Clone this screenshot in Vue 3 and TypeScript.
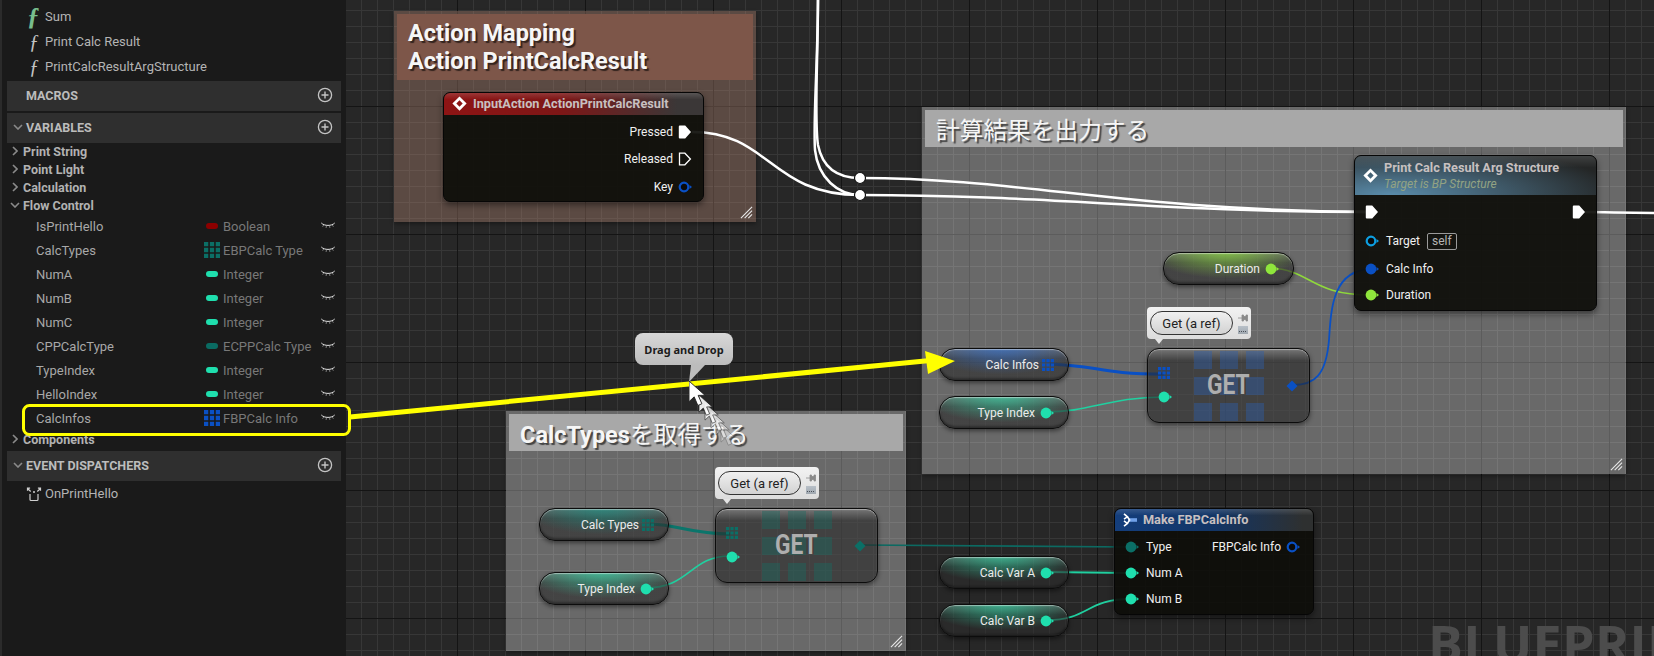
<script setup lang="ts">
type Pin = 'dot' | 'grid';

interface Comment {
  title: string;
  jp?: string;
  x: number;
  y: number;
  w: number;
  h: number;
  bar: number;
  brown?: boolean;
}

interface Pill {
  label: string;
  x: number;
  y: number;
  w: number;
  color: string;
  glow: string;
  pin: Pin;
}

const functions = [
  { name: 'Sum', main: true },
  { name: 'Print Calc Result', main: false },
  { name: 'PrintCalcResultArgStructure', main: false },
];

const categories = ['Print String', 'Point Light', 'Calculation'];

const variables = [
  { name: 'IsPrintHello', type: 'Boolean', color: '#8c0000', array: false },
  { name: 'CalcTypes', type: 'EBPCalc Type', color: '#0b6f66', array: true },
  { name: 'NumA', type: 'Integer', color: '#1fdfae', array: false },
  { name: 'NumB', type: 'Integer', color: '#1fdfae', array: false },
  { name: 'NumC', type: 'Integer', color: '#1fdfae', array: false },
  { name: 'CPPCalcType', type: 'ECPPCalc Type', color: '#0a6b62', array: false },
  { name: 'TypeIndex', type: 'Integer', color: '#1fdfae', array: false },
  { name: 'HelloIndex', type: 'Integer', color: '#1fdfae', array: false },
  { name: 'CalcInfos', type: 'FBPCalc Info', color: '#0a50c4', array: true },
];

const comments: Comment[] = [
  { title: 'Action Mapping\nAction PrintCalcResult', x: 394, y: 11, w: 362, h: 211, bar: 66, brown: true },
  { title: '', jp: '計算結果を出力する', x: 922, y: 107, w: 704, h: 367, bar: 37 },
  { title: 'CalcTypes', jp: 'を取得する', x: 506, y: 411, w: 400, h: 240, bar: 37 },
];

const TEAL = '#1fdfae';
const DARK_TEAL = '#0b6f66';
const BLUE = '#0a50c4';
const LIME = '#8fe63c';

const pills: Pill[] = [
  { label: 'Duration', x: 1163, y: 252, w: 131, color: LIME, glow: '143,230,60', pin: 'dot' },
  { label: 'Calc Infos', x: 939, y: 348, w: 130, color: BLUE, glow: '50,115,215', pin: 'grid' },
  { label: 'Type Index', x: 939, y: 396, w: 130, color: TEAL, glow: '50,220,170', pin: 'dot' },
  { label: 'Calc Types', x: 539, y: 508, w: 130, color: DARK_TEAL, glow: '20,150,135', pin: 'grid' },
  { label: 'Type Index', x: 539, y: 572, w: 130, color: TEAL, glow: '50,220,170', pin: 'dot' },
  { label: 'Calc Var A', x: 939, y: 556, w: 130, color: TEAL, glow: '50,220,170', pin: 'dot' },
  { label: 'Calc Var B', x: 939, y: 604, w: 130, color: TEAL, glow: '50,220,170', pin: 'dot' },
];

const getNodes = [
  { x: 1147, y: 348, color: BLUE, square: 'rgba(45,95,175,0.42)' },
  { x: 715, y: 508, color: DARK_TEAL, square: 'rgba(20,110,100,0.38)' },
];

const wires = [
  { d: 'M818 -5 C818 60 814 120 818 145 C823 170 840 178 860 178', color: '#fff', width: 2.5 },
  { d: 'M818 -5 C818 60 813 120 815 150 C818 178 838 195 860 195', color: '#fff', width: 2.5 },
  { d: 'M692 132 C770 132 770 195 860 195', color: '#fff', width: 2.5 },
  { d: 'M860 178 C1020 178 1130 211 1372 212', color: '#fff', width: 2.5 },
  { d: 'M860 195 C1050 195 1160 212 1372 212', color: '#fff', width: 2.5 },
  { d: 'M1580 212 C1610 212 1620 213 1660 213', color: '#fff', width: 2.5 },
  { d: 'M1270 268 C1312 270 1310 295 1371 295', color: '#8fd83c', width: 1.6 },
  { d: 'M1293 385 C1315 385 1326 375 1329 340 C1331 310 1332 270 1371 269', color: BLUE, width: 1.8 },
  { d: 'M1050 364 C1100 366 1100 374 1164 374', color: BLUE, width: 3 },
  { d: 'M1046 412 C1090 412 1110 397 1164 397', color: '#20d0a0', width: 1.6 },
  { d: 'M650 524 C680 525 690 534 730 534', color: '#0b756b', width: 3 },
  { d: 'M646 588 C690 588 690 556 730 556', color: '#20d0a0', width: 1.6 },
  { d: 'M861 545 L1131 547', color: '#0c6a62', width: 1.6 },
  { d: 'M1046 572 L1131 573', color: '#20d0a0', width: 2.2 },
  { d: 'M1046 620 C1090 620 1085 599 1131 599', color: '#20d0a0', width: 1.8 },
];

const knots = [178, 195];

const trail = [
  { x: 0, y: 0, scale: 1.15, alpha: 1 },
  { x: 10, y: 14, scale: 0.95, alpha: 0.9 },
  { x: 16, y: 22, scale: 0.95, alpha: 0.75 },
  { x: 22, y: 30, scale: 0.95, alpha: 0.6 },
  { x: 27, y: 37, scale: 0.95, alpha: 0.45 },
  { x: 32, y: 44, scale: 0.95, alpha: 0.3 },
].reverse();

const boxStyle = (b: { x: number; y: number; w?: number; h?: number }) => ({
  left: `${b.x}px`,
  top: `${b.y}px`,
  width: b.w ? `${b.w}px` : undefined,
  height: b.h ? `${b.h}px` : undefined,
});
</script>

<template>
  <div class="app">
    <svg class="defs" aria-hidden="true">
      <symbol id="pin-exec" viewBox="0 0 14 14">
        <path d="M1.8 .5h5.4L13 7l-5.8 6.5H1.8a1 1 0 0 1-1-1v-11a1 1 0 0 1 1-1z" fill="currentColor" />
      </symbol>
      <symbol id="pin-exec-open" viewBox="0 0 14 14">
        <path d="M1.5 1.2h5.4L12.4 7l-5.5 5.8H1.5z" fill="none" stroke="currentColor" stroke-width="1.3" />
      </symbol>
      <symbol id="pin-dot" viewBox="0 0 14 14">
        <circle cx="6" cy="7" r="5.4" fill="currentColor" />
        <path d="M11.5 5l2.5 2-2.5 2z" fill="currentColor" />
      </symbol>
      <symbol id="pin-ring" viewBox="0 0 14 14">
        <circle cx="6" cy="7" r="4.3" fill="#0a0a0a" stroke="currentColor" stroke-width="2.2" />
        <path d="M11.5 5l2.5 2-2.5 2z" fill="currentColor" />
      </symbol>
      <symbol id="pin-grid" viewBox="0 0 12 12">
        <path
          d="M0 0h3.2v3.2H0zM4.4 0h3.2v3.2H4.4zM8.8 0H12v3.2H8.8zM0 4.4h3.2v3.2H0zM4.4 4.4h3.2v3.2H4.4zM8.8 4.4H12v3.2H8.8zM0 8.8h3.2V12H0zM4.4 8.8h3.2V12H4.4zM8.8 8.8H12V12H8.8z"
          fill="currentColor"
        />
      </symbol>
      <symbol id="event-icon" viewBox="0 0 16 16">
        <path
          d="M4 8v5.5a1 1 0 0 0 1 1h6a1 1 0 0 0 1-1V8M1.5 2.5l3.2 3M1.5 4.8V2.2h2.6M14.5 2.5l-3.2 3M14.5 4.8V2.2h-2.6"
          fill="none"
          stroke="currentColor"
          stroke-width="1.2"
        />
        <circle cx="8" cy="6" r="1" fill="currentColor" />
      </symbol>
      <symbol id="eye-icon" viewBox="0 0 14 8">
        <path d="M.3 1C3.4 4.2 10.6 4.2 13.7 1" fill="none" stroke="currentColor" stroke-width="1" />
        <path d="M2.6 3.2l-.9 1.4M5.4 4.2l-.3 1.6M8.6 4.2l.3 1.6M11.4 3.2l.9 1.4" stroke="currentColor" stroke-width=".6" />
      </symbol>
      <symbol id="plus-icon" viewBox="0 0 16 16">
        <circle cx="8" cy="8" r="6.6" fill="none" stroke="currentColor" stroke-width="1.3" />
        <path d="M4.5 8h7M8 4.5v7" stroke="currentColor" stroke-width="1.4" />
      </symbol>
      <symbol id="diamond-icon" viewBox="0 0 16 16">
        <path d="M8 .4L15.6 8 8 15.6.4 8zM8 4.6L4.6 8 8 11.4 11.4 8z" fill="#fff" fill-rule="evenodd" />
      </symbol>
    </svg>

    <aside class="sidebar">
      <div v-for="fn in functions" :key="fn.name" class="item">
        <span class="fn-glyph" :class="{ main: fn.main }">ƒ</span>
        <span>{{ fn.name }}</span>
      </div>

      <div class="section">
        <span class="section-label">MACROS</span>
        <svg class="plus"><use href="#plus-icon" /></svg>
      </div>

      <div class="section">
        <svg class="chevron-down" viewBox="0 0 10 6"><path d="M1 1l4 4 4-4" /></svg>
        <span class="section-label">VARIABLES</span>
        <svg class="plus"><use href="#plus-icon" /></svg>
      </div>

      <div v-for="cat in categories" :key="cat" class="category">
        <svg class="chevron-right" viewBox="0 0 6 10"><path d="M1 1l4 4-4 4" /></svg>
        <span>{{ cat }}</span>
      </div>
      <div class="category open">
        <svg class="chevron-down small" viewBox="0 0 10 6"><path d="M1 1l4 4 4-4" /></svg>
        <span>Flow Control</span>
      </div>

      <div v-for="v in variables" :key="v.name" class="var-row">
        <span class="var-name">{{ v.name }}</span>
        <span class="var-swatch" :style="{ color: v.color }">
          <svg v-if="v.array" class="swatch-grid"><use href="#pin-grid" /></svg>
          <i v-else class="swatch-pill"></i>
        </span>
        <span class="var-type">{{ v.type }}</span>
        <svg class="eye"><use href="#eye-icon" /></svg>
      </div>

      <div class="category">
        <svg class="chevron-right" viewBox="0 0 6 10"><path d="M1 1l4 4-4 4" /></svg>
        <span>Components</span>
      </div>

      <div class="section">
        <svg class="chevron-down" viewBox="0 0 10 6"><path d="M1 1l4 4 4-4" /></svg>
        <span class="section-label">EVENT DISPATCHERS</span>
        <svg class="plus"><use href="#plus-icon" /></svg>
      </div>
      <div class="item">
        <svg class="event-glyph"><use href="#event-icon" /></svg>
        <span>OnPrintHello</span>
      </div>
    </aside>

    <main class="canvas">
      <div class="graph">
        <div class="watermark">BLUEPRINT</div>

        <section
          v-for="c in comments"
          :key="c.x"
          class="comment"
          :class="{ brown: c.brown }"
          :style="boxStyle(c)"
        >
          <h2 class="comment-title" :style="{ height: `${c.bar}px` }">
            <span class="latin">{{ c.title }}</span><span v-if="c.jp" class="jp">{{ c.jp }}</span>
          </h2>
          <svg class="resize" viewBox="0 0 14 14">
            <path d="M1 13L13 1M5 13l8-8M9 13l4-4" />
          </svg>
        </section>

        <svg class="wires" viewBox="0 0 1654 656">
          <path
            v-for="(w, i) in wires"
            :key="i"
            :d="w.d"
            fill="none"
            :stroke="w.color"
            :stroke-width="w.width"
          />
          <circle
            v-for="y in knots"
            :key="y"
            cx="860"
            :cy="y"
            r="5.5"
            fill="#fff"
            stroke="#111"
            stroke-width="1.2"
          />
        </svg>

        <div
          v-for="p in pills"
          :key="p.label + p.y"
          class="pill"
          :style="{ ...boxStyle(p), '--glow': p.glow, color: p.color }"
        >
          <span class="pill-label">{{ p.label }}</span>
          <svg v-if="p.pin === 'grid'" class="pill-grid"><use href="#pin-grid" /></svg>
          <svg v-else class="pin"><use href="#pin-dot" /></svg>
        </div>

        <div v-for="g in getNodes" :key="g.x" class="get-node" :style="boxStyle(g)">
          <div class="get-squares">
            <i v-for="n in 9" :key="n" :style="{ background: g.square }"></i>
          </div>
          <div class="get-pins">
            <svg class="pill-grid" :style="{ color: g.color }"><use href="#pin-grid" /></svg>
            <svg class="pin teal"><use href="#pin-dot" /></svg>
          </div>
          <span class="get-label">GET</span>
          <svg class="get-out" viewBox="0 0 12 12" :style="{ color: g.color }">
            <path d="M6 .5L11.5 6 6 11.5.5 6z" fill="currentColor" />
          </svg>
          <div class="bubble">
            <span class="bubble-text">Get (a ref)</span>
            <div class="bubble-tools">
              <svg viewBox="0 0 10 10" class="tool"><path d="M0 5h4M4 2h1.5v6H4zM5.5 3.5H8V2h1.5v6H8V6.5H5.5z" /></svg>
              <span class="tool-more"></span>
            </div>
          </div>
        </div>

        <article class="node input-node">
          <header class="node-head head-red">
            <svg class="head-icon"><use href="#diamond-icon" /></svg>
            <span>InputAction ActionPrintCalcResult</span>
          </header>
          <div class="input-rows">
            <div class="row-end">Pressed<svg class="pin white"><use href="#pin-exec" /></svg></div>
            <div class="row-end">Released<svg class="pin white"><use href="#pin-exec-open" /></svg></div>
            <div class="row-end key">Key<svg class="pin blue"><use href="#pin-ring" /></svg></div>
          </div>
        </article>

        <article class="node print-node">
          <header class="node-head head-steel">
            <svg class="head-icon"><use href="#diamond-icon" /></svg>
            <div>
              <div>Print Calc Result Arg Structure</div>
              <div class="subtitle">Target is BP Structure</div>
            </div>
          </header>
          <div class="print-rows">
            <div class="row-between">
              <svg class="pin white"><use href="#pin-exec" /></svg>
              <svg class="pin white"><use href="#pin-exec" /></svg>
            </div>
            <div class="row-start">
              <svg class="pin sky"><use href="#pin-ring" /></svg>Target<span class="self">self</span>
            </div>
            <div class="row-start"><svg class="pin blue"><use href="#pin-dot" /></svg>Calc Info</div>
            <div class="row-start"><svg class="pin lime"><use href="#pin-dot" /></svg>Duration</div>
          </div>
        </article>

        <article class="node make-node">
          <header class="node-head head-navy">
            <svg class="make-icon" viewBox="0 0 14 14">
              <path d="M5 5.2h9v3.6H5z" fill="#6fa0e8" />
              <path d="M1 .8l3.4 3L1 6.2M1 7.8l3.4 2.6L1 13.2M4.4 3.8L6.6 7l-2.2 3.4" fill="none" stroke="#fff" stroke-width="1.6" />
            </svg>
            <span>Make FBPCalcInfo</span>
          </header>
          <div class="make-rows">
            <div class="row-start"><svg class="pin dark-teal"><use href="#pin-dot" /></svg>Type</div>
            <div class="row-end out">FBPCalc Info<svg class="pin blue"><use href="#pin-ring" /></svg></div>
            <div class="row-start"><svg class="pin teal"><use href="#pin-dot" /></svg>Num A</div>
            <span></span>
            <div class="row-start"><svg class="pin teal"><use href="#pin-dot" /></svg>Num B</div>
          </div>
        </article>
      </div>
    </main>

    <svg class="annotation" viewBox="0 0 1654 656">
      <rect x="23.5" y="405.5" width="326" height="29" rx="6" fill="none" stroke="#ffff00" stroke-width="3" />
      <path d="M350 417L930 360.5" stroke="#ffff00" stroke-width="5" />
      <polygon points="925,351 955,361 928,374" fill="#ffff00" />
    </svg>

    <div class="tooltip">Drag and Drop</div>

    <svg class="cursor" viewBox="0 0 70 80">
      <g
        v-for="t in trail"
        :key="t.x"
        :transform="`translate(${t.x} ${t.y}) scale(${t.scale})`"
        :opacity="t.alpha"
      >
        <path d="M0 0v18l4.5-4.2 3.2 7.5 3.5-1.5-3.2-7.3h6z" fill="#fff" stroke="#222" stroke-width=".8" />
      </g>
    </svg>
  </div>
</template>

<style scoped>
.app {
  position: relative;
  display: flex;
  width: 1654px;
  height: 656px;
  overflow: hidden;
  background: #1a1a1a;
  font-family: Roboto, "Noto Sans CJK JP", sans-serif;
  font-size: 12px;
  color: #e8e8e8;
}

.defs {
  position: absolute;
  width: 0;
  height: 0;
}

/* left panel */
.sidebar {
  box-sizing: border-box;
  flex: 0 0 346px;
  height: 656px;
  padding: 4px 5px 0 5px;
  background: #1a1a1a;
  border-left: 2px solid #2b2b2b;
  font-size: 13px;
  color: #b4b4b4;
}

.item {
  position: relative;
  display: flex;
  align-items: center;
  height: 25px;
  padding-left: 38px;
}

.fn-glyph {
  position: absolute;
  left: 22px;
  font-family: "Liberation Serif", serif;
  font-style: italic;
  font-size: 20px;
  line-height: 1;
  color: #c4c4c4;
}

.fn-glyph.main {
  left: 20px;
  font-size: 25px;
  font-weight: 700;
  color: #78bd8d;
}

.event-glyph {
  position: absolute;
  left: 19px;
  width: 16px;
  height: 16px;
  color: #d0d0d0;
}

.section {
  position: relative;
  box-sizing: border-box;
  display: flex;
  align-items: center;
  height: 30px;
  margin-top: 2px;
  padding: 0 0 2px 19px;
  background: #2f2f2f;
}

.section-label {
  font-weight: 700;
  font-size: 12.5px;
  color: #bcbcbc;
}

.plus {
  position: absolute;
  right: 8px;
  width: 16px;
  height: 16px;
  color: #c4c4c4;
}

.chevron-down,
.chevron-right {
  position: absolute;
  fill: none;
  stroke: #8a8a8a;
  stroke-width: 1.6;
}

.chevron-down {
  left: 6px;
  width: 10px;
  height: 6px;
}

.chevron-down.small {
  left: 3px;
}

.chevron-right {
  left: 5px;
  width: 6px;
  height: 10px;
}

.category {
  position: relative;
  box-sizing: border-box;
  display: flex;
  align-items: center;
  height: 18px;
  padding: 0 0 2px 16px;
  font-size: 12.5px;
  font-weight: 700;
  color: #b2b2b2;
}

.var-row {
  box-sizing: border-box;
  display: grid;
  grid-template-columns: 168px 19px 98px 14px;
  align-items: center;
  height: 24px;
  margin-left: 29px;
  padding-bottom: 2px;
}

.var-name {
  color: #a8a8a8;
}

.var-swatch {
  display: flex;
  align-items: center;
}

.swatch-pill {
  display: block;
  width: 12px;
  height: 6px;
  margin-left: 2px;
  border-radius: 3px;
  background: currentColor;
}

.swatch-grid {
  width: 16px;
  height: 16px;
}

.var-type {
  color: #787878;
}

.eye {
  width: 14px;
  height: 8px;
  color: #e4e4e4;
}

/* graph canvas */
.canvas {
  position: relative;
  flex: 1;
  overflow: hidden;
}

.graph {
  position: absolute;
  left: -346px;
  top: 0;
  width: 1654px;
  height: 656px;
  background-color: #272727;
  background-image:
    linear-gradient(90deg, #141414 1px, transparent 1px),
    linear-gradient(#141414 1px, transparent 1px),
    linear-gradient(90deg, #373737 1px, transparent 1px),
    linear-gradient(#373737 1px, transparent 1px);
  background-size: 128px 128px, 128px 128px, 16px 16px, 16px 16px;
  background-position: 73px 0, 0 106px, 9px 0, 0 10px;
}

.watermark {
  position: absolute;
  left: 1428px;
  top: 608px;
  font-family: "Open Sans", sans-serif;
  font-weight: 700;
  font-size: 52px;
  letter-spacing: 0.3px;
  line-height: 70px;
  white-space: nowrap;
  color: #4c4c4c;
}

.comment {
  position: absolute;
  box-sizing: border-box;
  padding: 3px 3px 0;
  background: rgba(255, 255, 255, 0.31);
  box-shadow: 0 2px 4px rgba(0, 0, 0, 0.35);
}

.comment.brown {
  background: rgba(170, 128, 110, 0.4);
}

.comment-title {
  box-sizing: border-box;
  margin: 0;
  padding: 5px 11px 0;
  background: #a8a8a8;
  font-size: 23.5px;
  line-height: 28px;
  font-weight: 400;
  color: #f6f6f6;
  white-space: pre-line;
  text-shadow: 2px 2px 1px rgba(0, 0, 0, 0.6);
}

.comment.brown .comment-title {
  background: #7d5649;
  padding-top: 5px;
}

.latin {
  font-weight: 700;
}

.jp {
  font-family: "Noto Sans CJK JP", sans-serif;
  font-size: 23.7px;
}

.resize {
  position: absolute;
  right: 3px;
  bottom: 3px;
  width: 13px;
  height: 13px;
  fill: none;
  stroke: #e8e8e8;
  stroke-width: 1.2;
}

.wires {
  position: absolute;
  inset: 0;
  width: 1654px;
  height: 656px;
}

.pin {
  flex: none;
  width: 14px;
  height: 14px;
}

.pin.white { color: #fff; }
.pin.blue { color: #0a50c4; }
.pin.sky { color: #0d9ee0; }
.pin.lime { color: #8fe63c; }
.pin.teal { color: #1fdfae; }
.pin.dark-teal { color: #0b6f66; }

.pill {
  position: absolute;
  box-sizing: border-box;
  display: flex;
  align-items: center;
  justify-content: flex-end;
  gap: 5px;
  height: 33px;
  padding: 0 14px 0 0;
  border: 1px solid #0c0c0c;
  border-radius: 16px;
  background:
    radial-gradient(ellipse 62% 90% at 48% -8%, rgba(var(--glow), 0.7), rgba(var(--glow), 0) 100%),
    linear-gradient(180deg, rgba(255, 255, 255, 0.2), rgba(255, 255, 255, 0.02) 30%),
    rgba(38, 38, 38, 0.62);
  box-shadow:
    0 2px 4px rgba(0, 0, 0, 0.45),
    inset 0 1px 1px rgba(255, 255, 255, 0.45),
    inset 0 -2px 2px rgba(0, 0, 0, 0.35);
}

.pill-label {
  color: #ececec;
}

.pill-grid {
  flex: none;
  width: 12px;
  height: 12px;
  margin-left: -2px;
}

.get-pins .pill-grid {
  margin-left: 0;
}

.get-node {
  position: absolute;
  box-sizing: border-box;
  display: grid;
  grid-template-columns: 1fr auto 1fr;
  align-items: center;
  width: 163px;
  height: 75px;
  padding: 0 10px;
  border: 1px solid #0c0c0c;
  border-radius: 12px;
  background:
    linear-gradient(180deg, rgba(255, 255, 255, 0.28), rgba(255, 255, 255, 0) 16%),
    rgba(38, 38, 38, 0.6);
  box-shadow: 0 2px 5px rgba(0, 0, 0, 0.45), inset 0 1px 1px rgba(255, 255, 255, 0.4);
}

.get-squares {
  position: absolute;
  left: 46px;
  top: 2px;
  display: grid;
  grid-template-columns: repeat(3, 18px);
  grid-template-rows: repeat(3, 18px);
  gap: 8px;
}

.get-pins {
  position: relative;
  display: flex;
  flex-direction: column;
  gap: 11px;
}

.get-label {
  position: relative;
  font-size: 27px;
  font-weight: 700;
  line-height: 1;
  color: #aeaeae;
  transform: scaleX(0.84);
}

.get-out {
  position: relative;
  justify-self: end;
  width: 12px;
  height: 12px;
  margin-right: 1px;
}

.bubble {
  position: absolute;
  left: -1px;
  top: -42px;
  box-sizing: border-box;
  display: flex;
  align-items: center;
  gap: 5px;
  width: 104px;
  height: 32px;
  padding: 0 3px;
  border-radius: 4px;
  background: linear-gradient(180deg, #f2f2f2, #dcdcdc);
}

.bubble::after {
  content: "";
  position: absolute;
  left: 8px;
  top: 32px;
  border: 4px solid transparent;
  border-top: 5px solid #e4e4e4;
  border-bottom: 0;
}

.bubble-text {
  box-sizing: border-box;
  display: flex;
  align-items: center;
  justify-content: center;
  width: 84px;
  height: 24px;
  border: 1px solid #333;
  border-radius: 12px;
  background: linear-gradient(180deg, #f0f0f0, #d2d2d2);
  font-size: 13px;
  color: #222;
}

.bubble-tools {
  display: flex;
  flex-direction: column;
  gap: 3px;
}

.tool {
  width: 10px;
  height: 10px;
  fill: #8a8a8a;
  stroke: #8a8a8a;
  stroke-width: 0.8;
}

.tool-more {
  display: block;
  width: 10px;
  height: 8px;
  background:
    repeating-linear-gradient(90deg, #4a5058 0 1px, transparent 1px 2px) 1px 5px / 8px 1px no-repeat,
    linear-gradient(180deg, #b8c0c8, #a0a8b0);
}

/* function nodes */
.node {
  position: absolute;
  box-sizing: border-box;
  border: 1px solid #060606;
  border-radius: 7px;
  background: rgba(14, 14, 10, 0.93);
  box-shadow: 0 3px 6px rgba(0, 0, 0, 0.45);
  color: #f0f0f0;
}

.node-head {
  box-sizing: border-box;
  display: flex;
  align-items: center;
  gap: 6px;
  padding: 0 0 1px 8px;
  border-radius: 6px 6px 0 0;
  font-size: 12.7px;
  font-weight: 700;
  color: #c8c0c0;
}

.head-icon {
  flex: none;
  width: 15px;
  height: 15px;
}

.head-red {
  height: 22px;
  background:
    linear-gradient(180deg, rgba(255, 255, 255, 0.15), rgba(255, 255, 255, 0) 30%),
    linear-gradient(90deg, #8e1414, #7e1616 45%, #3b3737 90%);
}

.head-steel {
  height: 39px;
  background:
    linear-gradient(180deg, rgba(255, 255, 255, 0.12), rgba(255, 255, 255, 0) 30%),
    radial-gradient(ellipse 95% 130% at 15% 100%, #5a8cab, rgba(90, 140, 171, 0) 100%),
    #242626;
}

.head-navy {
  height: 22px;
  background:
    linear-gradient(180deg, rgba(255, 255, 255, 0.15), rgba(255, 255, 255, 0) 30%),
    linear-gradient(90deg, #143e7c, #123566 50%, #2e3030 95%);
}

.subtitle {
  margin-top: 2px;
  font-weight: 400;
  font-size: 12px;
  font-style: italic;
  color: #93a383;
}

.row-end,
.row-start,
.row-between {
  display: flex;
  align-items: center;
}

.row-end {
  justify-content: flex-end;
  gap: 5px;
}

.row-start {
  gap: 7px;
}

.row-between {
  justify-content: space-between;
}

.input-node {
  left: 443px;
  top: 92px;
  width: 261px;
  height: 110px;
}

.input-rows {
  display: grid;
  grid-auto-rows: 27.5px;
  padding: 3px 11px 0 0;
}

.print-node {
  left: 1354px;
  top: 155px;
  width: 243px;
  height: 156px;
}

.print-rows {
  display: grid;
  grid-template-rows: 34px 24px 32px 20px;
  padding: 0 10px;
}

.self {
  box-sizing: border-box;
  height: 17px;
  padding: 0 4px;
  border: 1px solid #9a9a9a;
  border-radius: 2px;
  line-height: 15px;
  color: #b4b4b4;
}

.make-node {
  left: 1114px;
  top: 508px;
  width: 200px;
  height: 107px;
}

.make-icon {
  flex: none;
  width: 14px;
  height: 14px;
}

.make-rows {
  display: grid;
  grid-template-columns: auto 1fr;
  grid-auto-rows: 26px;
  padding: 3px 13px 0 10px;
}

/* overlays */
.annotation {
  position: absolute;
  inset: 0;
  width: 1654px;
  height: 656px;
}

.tooltip {
  position: absolute;
  left: 635px;
  top: 333px;
  box-sizing: border-box;
  display: flex;
  align-items: center;
  justify-content: center;
  width: 98px;
  height: 32px;
  border-radius: 8px;
  background: linear-gradient(180deg, #d8d8d8, #bcbcbc);
  font-family: "Noto Sans", sans-serif;
  font-size: 11px;
  font-weight: 700;
  color: #1c1c1c;
}

.tooltip::after {
  content: "";
  position: absolute;
  left: 44px;
  top: 32px;
  width: 26px;
  height: 17px;
  background: #bcbcbc;
  clip-path: polygon(12px 0, 26px 0, 10px 17px);
}

.cursor {
  position: absolute;
  left: 689px;
  top: 381px;
  width: 70px;
  height: 80px;
}
</style>

<style>
html,
body {
  margin: 0;
  background: #1a1a1a;
}
</style>
